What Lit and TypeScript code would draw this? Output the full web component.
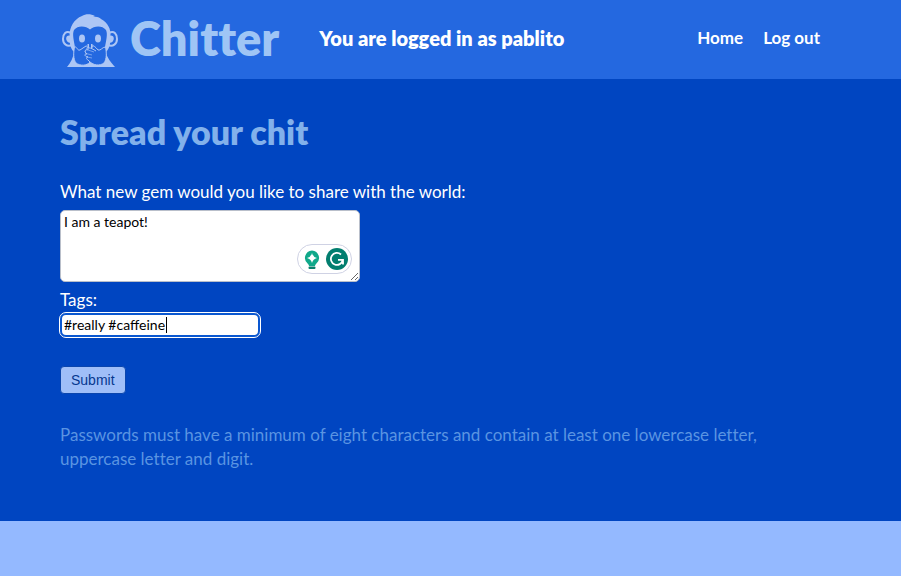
import { LitElement, html, css, svg } from "lit";
import { customElement } from "lit/decorators.js";

const monkey = svg`
  <path class="fill" d="M27 11C31 8.5 36 9 40 11L38 12C42 11 45 13 46 14C53 18 56 24 55.500 31C55.500 38 55 43 51 47C52 53 56 57 60 62H12C16 57 18 53 19 47C15 43 14.500 38 14.500 31C14.500 22 19 14 27 11Z"/>
  <path class="line" d="M16 28C11 25 8 29 8 34C8 39 12 42 17 40M54 28C59 25 62 29 62 34C62 39 58 42 53 40"/>
  <path class="fill" d="M16 31C12 29 10 33 12 36C13 38 15 38 17 37ZM54 31C58 29 60 33 58 36C57 38 55 38 53 37Z"/>
  <path class="cut" d="M35 24.500C31 21 23 20 19 25C17 29 19 36 20 42L30 52H41L50 42C51 36 53 29 51 25C47 20 39 21 35 24.500Z"/>
  <ellipse class="fill" cx="27" cy="33.500" rx="3" ry="4"/>
  <ellipse class="fill" cx="43" cy="33.500" rx="3" ry="4"/>
  <path class="fill" d="M32.500 39H34V43H32.500ZM36 39H37.500V43H36Z"/>
  <path class="hand" d="M19.500 42C22 41 22 46 25 45L31 41C33 41 33 43 30 46C32 50 32 53 35 57C32 61 25 61 21 58C18 54 18.500 47 19.500 42Z"/>
  <path class="hand" d="M38 42C36 39 40 41 43 45C46 46 47 42 50.500 42C51.500 47 52 54 49 58C45 61 38 61 33 55C31 54 31 52 33 52C29 51 29 49 32 49C29 47 30 44 33 45C32 42 35 42 41 46"/>
  <path class="finger" d="M33 45L39 47M31 48.500L37 50M32 52L37 53"/>
`;

@customElement("app-root")
export class AppRoot extends LitElement {
  static styles = css`
    :host { display: block; min-height: 100vh; background: #94b9ff; color: #fff; font: 17px/24px Lato, sans-serif; font-variant-ligatures: none; }
    * { box-sizing: border-box; }
    header { background: #2468e0; }
    .bar { display: flex; align-items: center; max-width: 900px; min-height: 79px; padding: 0 80px 4px 60px; }
    .logo { width: 70px; height: 70px; margin: 4px 0 0 -5px; color: #adc6f5; }
    .fill { fill: currentColor; }
    .line { fill: none; stroke: currentColor; stroke-width: 2; }
    .cut { fill: #2468e0; }
    .hand { fill: #2468e0; stroke: currentColor; stroke-width: 1; stroke-linejoin: round; }
    .finger { fill: none; stroke: currentColor; stroke-width: 0.6; }
    .brand { display: flex; align-items: center; gap: 5px; color: #9fc5f5; text-decoration: none; font-size: 47px; font-weight: 800; line-height: 56px; }
    .status { margin: 0 auto 0 40px; font-size: 20px; font-weight: 800; }
    nav { display: flex; gap: 20px; }
    nav a { color: #fff; text-decoration: none; font-weight: 700; }
    main { background: #0045c1; }
    .content { max-width: 840px; padding: 31px 60px 50px; }
    h1 { margin: 0 0 26px; color: #82b1eb; font-size: 34px; font-weight: 800; line-height: 44px; }
    form { display: flex; flex-direction: column; align-items: flex-start; }
    .field { position: relative; display: flex; margin: 6px 0; }
    .field.tight { margin: 1px 0 29px; }
    textarea, input { font: 14px/20px Lato, sans-serif; color: #000; background: #fff; border: 1px solid #b9bfca; border-radius: 5px; padding: 1px 3px; }
    textarea { width: 300px; height: 72px; }
    input { width: 200px; height: 24px; border: 2px solid #0a57d0; border-radius: 6px; padding: 0 2px 2px; outline: 1px solid #fff; caret-color: transparent; }
    .caret { position: absolute; left: 106px; top: 4px; width: 1px; height: 16px; background: #000; }
    .assist { position: absolute; right: 8px; bottom: 8px; width: 55px; height: 30px; }
    button { height: 28px; padding: 0 10px; border: 1px solid #0a45ad; border-radius: 4px; background: #9fbef8; color: #06388f; font: 14px "Liberation Sans", sans-serif; }
    .hint { margin: 29px 0 0; color: #5a94e2; }
  `;

  render() {
    return html`
      <header><div class="bar">
        <a class="brand" href="#"><svg class="logo" viewBox="0 0 70 70" aria-hidden="true">${monkey}</svg>Chitter</a>
        <p class="status">You are logged in as pablito</p>
        <nav><a href="#">Home</a><a href="#">Log out</a></nav>
      </div></header>
      <main><div class="content">
        <h1>Spread your chit</h1>
        <form>
          <label for="chit">What new gem would you like to share with the world:</label>
          <div class="field">
            <textarea id="chit" .value=${"I am a teapot!"}></textarea>
            <svg class="assist" viewBox="0 0 55 30" aria-hidden="true">
              <rect x="0.500" y="0.500" width="54" height="29" rx="14.500" fill="#fff" stroke="#cfd2e4"/>
              <path d="M15 6.500a7.500 7.500 0 0 1 4 13.500q-1 1-1 2h-6q0-1-1-2A7.500 7.500 0 0 1 15 6.500Z" fill="#10a88a"/>
              <path d="M15 9q1 4 5 5-4 1-5 5-1-4-5-5 4-1 5-5Z" fill="#fff"/>
              <rect x="11.500" y="22.500" width="7" height="2.500" rx="1" fill="#087f6c"/>
              <circle cx="40" cy="15" r="11" fill="#027e6f"/>
              <path d="M44 10.500A6 6 0 1 0 45.800 16M41 15.800h5v4.700" fill="none" stroke="#fff" stroke-width="1.800"/>
            </svg>
          </div>
          <label for="tags">Tags:</label>
          <div class="field tight"><input id="tags" type="text" .value=${"#really #caffeine"}><span class="caret"></span></div>
          <button type="button">Submit</button>
        </form>
        <p class="hint">Passwords must have a minimum of eight characters and contain at least one lowercase letter, uppercase letter and digit.</p>
      </div></main>`;
  }
}
